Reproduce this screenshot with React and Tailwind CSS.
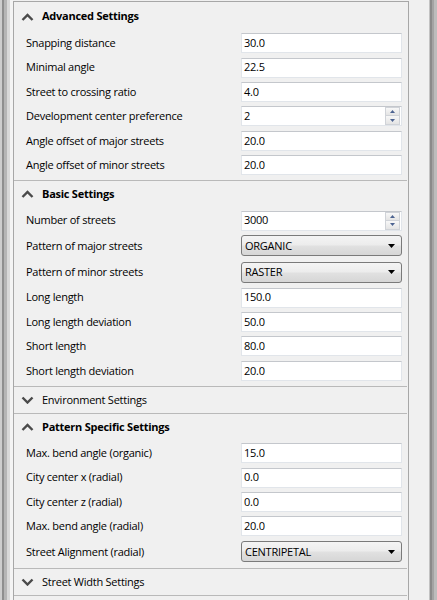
const advanced = [
  { label: "Snapping distance", value: "30.0" },
  { label: "Minimal angle", value: "22.5" },
  { label: "Street to crossing ratio", value: "4.0" },
  { label: "Development center preference", value: "2", kind: "spin" },
  { label: "Angle offset of major streets", value: "20.0" },
  { label: "Angle offset of minor streets", value: "20.0" },
];

const basic = [
  { label: "Number of streets", value: "3000", kind: "spin" },
  { label: "Pattern of major streets", value: "ORGANIC", kind: "combo" },
  { label: "Pattern of minor streets", value: "RASTER", kind: "combo" },
  { label: "Long length", value: "150.0" },
  { label: "Long length deviation", value: "50.0" },
  { label: "Short length", value: "80.0" },
  { label: "Short length deviation", value: "20.0" },
];

const pattern = [
  { label: "Max. bend angle (organic)", value: "15.0" },
  { label: "City center x (radial)", value: "0.0" },
  { label: "City center z (radial)", value: "0.0" },
  { label: "Max. bend angle (radial)", value: "20.0" },
  { label: "Street Alignment (radial)", value: "CENTRIPETAL", kind: "combo" },
];

function Chevron({ open }) {
  return (
    <svg width="13" height="8" viewBox="0 0 13 8" className="shrink-0">
      <polyline
        points={open ? "1.5,7 6.5,2 11.5,7" : "1.5,1.5 6.5,6.5 11.5,1.5"}
        fill="none"
        stroke="#4a4a4a"
        strokeWidth="2.4"
      />
    </svg>
  );
}

function TextBox({ value }) {
  return (
    <div className="flex h-[20px] w-[161px] items-center border border-[#e1e5ea] border-t-[#c4c7cc] bg-white pl-[2px]">
      {value}
    </div>
  );
}

function SpinBox({ value }) {
  return (
    <div className="flex h-[20px] w-[161px] items-center border border-[#e1e5ea] border-t-[#c4c7cc] bg-white pl-[2px]">
      <span className="flex-1">{value}</span>
      <div className="mr-px flex h-[18px] w-[15px] flex-col">
        <div className="flex h-[9px] items-center justify-center border border-[#d0d3d8] bg-gradient-to-b from-[#f8f8f8] to-[#e4e4e4]">
          <svg width="5" height="3" viewBox="0 0 5 3">
            <polygon points="0,3 2.5,0 5,3" fill="#4c6391" />
          </svg>
        </div>
        <div className="flex h-[9px] items-center justify-center border border-t-0 border-[#d0d3d8] bg-gradient-to-b from-[#f8f8f8] to-[#e4e4e4]">
          <svg width="5" height="3" viewBox="0 0 5 3">
            <polygon points="0,0 5,0 2.5,3" fill="#4c6391" />
          </svg>
        </div>
      </div>
    </div>
  );
}

function ComboBox({ value }) {
  return (
    <div className="flex h-[21px] w-[161px] items-center rounded-[3px] border border-[#7a7a7a] bg-[linear-gradient(to_bottom,#f4f4f4_0%,#ececec_48%,#e1e1e1_52%,#d6d6d6_100%)] pl-[3px] pr-[6px]">
      <span className="flex-1">{value}</span>
      <svg width="7" height="4" viewBox="0 0 7 4">
        <polygon points="0,0 7,0 3.5,4" fill="#000000" />
      </svg>
    </div>
  );
}

function Row({ item }) {
  const combo = item.kind === "combo";
  return (
    <div className={`flex items-center ${combo ? "h-[26.4px]" : "h-[24.4px]"}`}>
      <div className="w-[227px] pl-[12px]">{item.label}</div>
      {combo ? (
        <ComboBox value={item.value} />
      ) : item.kind === "spin" ? (
        <SpinBox value={item.value} />
      ) : (
        <TextBox value={item.value} />
      )}
    </div>
  );
}

function Section({ title, open, rows, first }) {
  return (
    <div className={first ? "" : "mr-px border-t border-[#b9b9b9]"}>
      <div
        className={`flex items-center pl-[7px] ${first ? "h-[28px] pt-[1px]" : "h-[26px]"}`}
      >
        <Chevron open={open} />
        <span className={`ml-[8px] ${open ? "font-bold" : ""}`}>{title}</span>
      </div>
      {open && (
        <div className="pb-[3px] pt-px">
          {rows.map((r) => (
            <Row key={r.label} item={r} />
          ))}
        </div>
      )}
    </div>
  );
}

export default function App() {
  return (
    <div className="flex h-[600px] w-[437px] overflow-hidden bg-[#f0f0f0] font-['Open_Sans','Noto_Sans',sans-serif] text-[11px] tracking-[-0.25px] text-black">
      <div className="flex h-full w-[13px] shrink-0">
        <div className="w-[2px] bg-[#cdcdcd]" />
        <div className="w-[2px] bg-[#8e8e8e]" />
        <div className="w-[3px] bg-[#b5b5b5]" />
        <div className="w-[3px] bg-[#d8d8d8]" />
        <div className="w-[3px] bg-[#f4f4f4]" />
      </div>
      <div className="mt-px w-[396px] shrink-0 border-l border-r border-t border-[#a7a7a7]">
        <Section first title="Advanced Settings" open rows={advanced} />
        <Section title="Basic Settings" open rows={basic} />
        <Section title="Environment Settings" />
        <Section title="Pattern Specific Settings" open rows={pattern} />
        <Section title="Street Width Settings" />
        <div className="mr-px border-t border-[#b9b9b9]" />
      </div>
      <div className="w-[20px] shrink-0" />
      <div className="flex h-full w-[8px] shrink-0">
        <div className="w-px bg-[#c2c2c2]" />
        <div className="w-[2px] bg-[#8a8a8a]" />
        <div className="w-[2px] bg-[#a3a3a3]" />
        <div className="w-[3px] bg-[#bcbcbc]" />
      </div>
    </div>
  );
}
